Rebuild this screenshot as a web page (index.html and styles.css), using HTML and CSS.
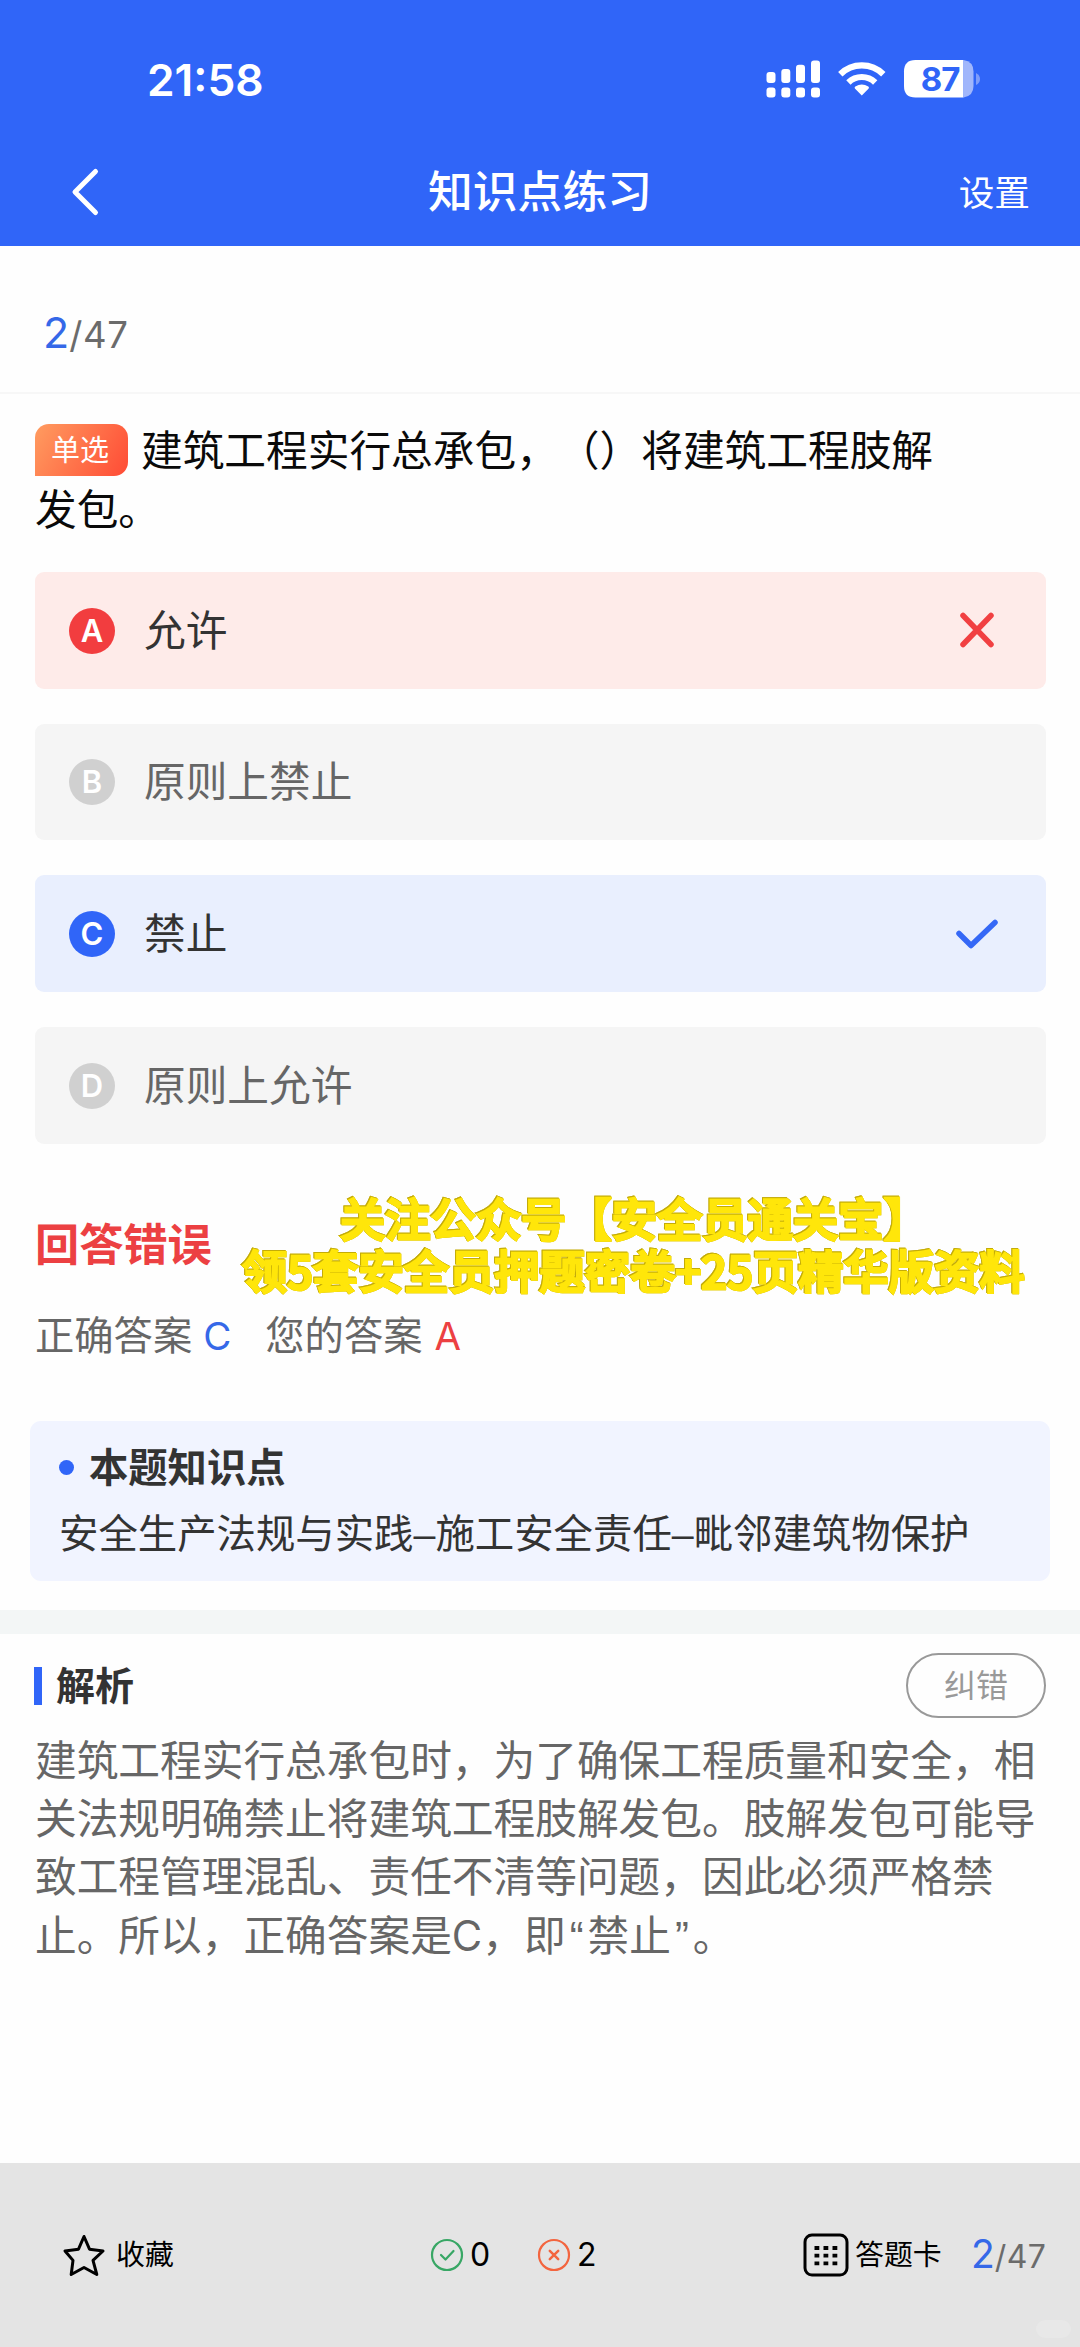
FILE: index.html
```html
<!DOCTYPE html>
<html lang="zh-CN">
<head>
<meta charset="utf-8">
<title>知识点练习</title>
<link rel="stylesheet" href="styles.css">
</head>
<body>
<header class="header">
  <div class="status">
    <span class="time">21:58</span>
    <svg class="status-icons" width="216" height="40" viewBox="766 59 216 40">
      <g fill="#fff">
        <rect x="766.5" y="72" width="9" height="11" rx="3"/><rect x="781.3" y="69" width="9" height="14" rx="3"/><rect x="796" y="64.8" width="9" height="18.2" rx="3"/><rect x="811" y="60.5" width="9" height="22.5" rx="3"/>
        <rect x="766.5" y="87.5" width="9" height="10" rx="3"/><rect x="781.3" y="87.5" width="9" height="10" rx="3"/><rect x="796" y="87.5" width="9" height="10" rx="3"/><rect x="811" y="87.5" width="9" height="10" rx="3"/>
        <path d="M861.8 95.6L854.9 88.4Q854.2 87.3 855.3 86.6Q861.8 82.2 868.3 86.6Q869.4 87.3 868.7 88.4Z"/>
      </g>
      <g fill="none" stroke="#fff" stroke-width="6.2">
        <path d="M840.3 74.3A30.5 30.5 0 0 1 883.3 74.3"/>
        <path d="M848.4 82.4A19.3 19.3 0 0 1 875.2 82.4"/>
      </g>
      <path d="M915.5 60H963.5V97.5H915.5Q904 97.5 904 86V71.500Q904 60 915.5 60Z" fill="#fff"/>
      <path d="M963.5 60Q973.5 61.500 973.5 71.500V86Q973.500 96 963.500 97.500Z" fill="#a0b6fb"/>
      <path d="M976 73Q980 75 980 79T976 85Z" fill="#7f9dfa"/>
      <text x="940" y="91" class="battery">87</text>
    </svg>
  </div>
  <nav class="nav">
    <svg class="back" width="30" height="50" viewBox="0 0 30 50"><path d="M25.500 4.500L5 25L25.500 45.500" fill="none" stroke="#fff" stroke-width="5" stroke-linecap="round" stroke-linejoin="round"/></svg>
    <h1 class="title">知识点练习</h1>
    <span class="settings">设置</span>
  </nav>
</header>

<div class="progress"><span class="cur">2</span><span class="total">/47</span></div>

<main>
  <p class="question"><span class="tag">单选</span>建筑工程实行总承包，（）将建筑工程肢解<br>发包。</p>
  <ul class="options">
    <li class="option wrong"><span class="letter">A</span><span>允许</span>
      <svg class="mark" width="48" height="48" viewBox="0 0 48 48"><path d="M10 8.500L38 37.500M38 8.500L10 37.500" stroke="#f14042" stroke-width="5.500" stroke-linecap="round"/></svg></li>
    <li class="option"><span class="letter">B</span><span>原则上禁止</span></li>
    <li class="option right"><span class="letter">C</span><span>禁止</span>
      <svg class="mark" width="48" height="48" viewBox="0 0 48 48"><path d="M6 23.500L18 35.500L42 12.500" fill="none" stroke="#3568f6" stroke-width="5.500" stroke-linecap="round" stroke-linejoin="round"/></svg></li>
    <li class="option"><span class="letter">D</span><span>原则上允许</span></li>
  </ul>

  <section class="result">
    <h2 class="verdict">回答错误</h2>
    <p class="promo"><span class="promo-top">关注公众号【安全员通关宝】</span><span>领5套安全员押题密卷+25页精华版资料</span></p>
    <p class="answers">正确答案<b class="ans-right">C</b>您的答案<b class="ans-mine">A</b></p>
  </section>

  <section class="point">
    <h3 class="point-title">本题知识点</h3>
    <p class="point-text">安全生产法规与实践<i>–</i>施工安全责任<i>–</i>毗邻建筑物保护</p>
  </section>
</main>

<section class="analysis">
  <div class="analysis-head"><h3 class="analysis-title">解析</h3><span class="report">纠错</span></div>
  <p class="analysis-text">建筑工程实行总承包时，为了确保工程质量和安全，相<br>关法规明确禁止将建筑工程肢解发包。肢解发包可能导<br>致工程管理混乱、责任不清等问题，因此必须严格禁<br>止。所以，正确答案是C，即<i>“</i>禁止<i>”</i>。</p>
</section>

<footer class="footer">
  <div class="fav">
    <svg width="44" height="44" viewBox="0 0 44 44"><path d="M22 3.500L27.500 16.200L41 18L31 27.400L34.800 41.500L22 34.500L9.200 41.500L11 27.400L3 18L16.500 16.200Z" fill="none" stroke="#000" stroke-width="3" stroke-linejoin="round"/></svg>
    <span>收藏</span>
  </div>
  <div class="count count-right">
    <svg width="34" height="34" viewBox="0 0 34 34" fill="none" stroke="#38a765" stroke-width="2.200" stroke-linecap="round" stroke-linejoin="round"><circle cx="17" cy="17" r="15"/><path d="M11 17L15.500 21.500L23.500 13"/></svg>
    <span>0</span>
  </div>
  <div class="count count-wrong">
    <svg width="34" height="34" viewBox="0 0 34 34" fill="none" stroke="#f3653f" stroke-width="2.200" stroke-linecap="round"><circle cx="17" cy="17" r="15"/><path d="M12.800 12.800L21.200 21.200M21.200 12.800L12.800 21.200" stroke-width="2.500"/></svg>
    <span>2</span>
  </div>
  <div class="card">
    <svg width="46" height="44" viewBox="0 0 46 44"><rect x="2" y="2" width="42" height="40" rx="7" fill="none" stroke="#000" stroke-width="3"/><path d="M11.500 15H16.300M20.500 15H25.300M29.500 15H34.300M11.500 22.700H16.300M20.500 22.700H25.300M29.500 22.700H34.300M11.500 30.400H16.300M20.500 30.400H25.300M29.500 30.400H34.300" stroke="#000" stroke-width="3.800"/></svg>
    <span>答题卡</span>
  </div>
  <div class="progress-small"><span class="cur">2</span><span class="total">/47</span></div>
  <span class="stamp"></span>
</footer>
</body>
</html>
```
FILE: styles.css
```css
* { box-sizing: border-box; margin: 0; padding: 0; }

body {
  width: 1080px;
  height: 2347px;
  display: flex;
  flex-direction: column;
  overflow: hidden;
  background: #fefefe;
  color: #333;
  font-family: Inter, "Noto Sans CJK SC", sans-serif;
  text-spacing-trim: space-all;
}

/* Header */
.header { height: 246px; flex: none; background: #3065f8; color: #fff; }
.status { display: flex; justify-content: space-between; align-items: center; height: 98px; margin-bottom: 34px; padding: 59px 98px 0 147px; }
.time { font-size: 44.300px; font-weight: 600; line-height: 40px; padding-top: 2px; }
.status-icons { display: block; }
.battery { font: 700 33px Inter, sans-serif; fill: #3065f8; text-anchor: middle; letter-spacing: -1px; }
.nav { display: grid; grid-template-columns: 200px 1fr 200px; align-items: center; height: 120px; padding: 0 50px 0 70px; }
.back { display: block; }
.title { font-size: 44.800px; font-weight: 500; text-align: center; padding-right: 20px; line-height: 60px; }
.settings { font-size: 35.700px; text-align: right; line-height: 50px; padding-top: 2px; }

/* Progress */
.progress { height: 148px; flex: none; padding: 56px 0 0 43px; border-bottom: 2px solid #f7f7f7; line-height: 60px; }
.cur { color: #3568e8; font-size: 43px; }
.total { color: #6b6b6b; font-size: 36.500px; letter-spacing: 0.600px; }

/* Question */
.question { height: 149px; margin: 28px 35px 0; color: #0a0a0a; font-size: 41.700px; line-height: 58.300px; }
.tag {
  display: inline-block; width: 93px; height: 52px; margin-right: 13px; vertical-align: middle;
  position: relative; top: -5px;
  border-radius: 14px 14px 14px 0; background: linear-gradient(120deg, #ff9c60, #ff4b35);
  color: #fff; font-size: 29px; line-height: 53px; text-align: center; text-indent: -3px;
}
.options { list-style: none; display: grid; gap: 35.200px; margin-top: 1px; padding: 0 34px 0 35px; grid-auto-rows: 116.500px; }
.option { display: flex; align-items: center; padding: 1px 45px 0 34px; border-radius: 9px; background: #f5f5f5; color: #666; font-size: 41.700px; line-height: 60px; }
.letter { width: 46px; height: 46px; margin-right: 29px; border-radius: 50%; background: #d0d0d0; color: #fff; font-size: 31px; font-weight: 600; line-height: 46px; text-align: center; }
.mark { margin-left: auto; }
.wrong { background: #feebe9; color: #333; }
.wrong .letter { background: #f23d3f; }
.right { background: #e9effe; color: #333; }
.right .letter { background: #3065f8; }

/* Result */
.result { display: grid; grid-template-columns: 207px 1fr; height: 277px; padding: 46px 50px 0 35px; grid-template-rows: 116px 60px; }
.verdict { color: #ec4042; font-size: 44.200px; line-height: 60px; padding-top: 25px; }
.promo {
  display: grid; justify-items: start; grid-auto-rows: 52.500px; line-height: 52.500px; padding-top: 1px;
  font-family: "Noto Sans CJK SC", sans-serif;
  font-size: 45.300px; font-weight: 500; color: #ffe60a; white-space: nowrap;
  -webkit-text-stroke: 2.600px #ffe60a; paint-order: stroke fill;
  filter: drop-shadow(0.800px 0.800px 0 #c4ac08) drop-shadow(-0.800px -0.800px 0 #c4ac08);
}
.promo-top { margin-left: 98px; }
.answers { grid-column: 1 / 3; color: #666; font-size: 39.300px; line-height: 60px; }
.answers b { font-weight: 400; font-size: 38.500px; }
.ans-right { color: #3568e8; margin: 0 34px 0 11px; }
.ans-mine { color: #ec4042; margin-left: 12px; }

/* Knowledge point */
.point { height: 160px; margin: 0 30px; padding: 17px 29px 0; border-radius: 11px; background: #f1f4ff; }
.point-title { display: flex; align-items: center; gap: 15px; font-size: 39.300px; line-height: 60px; }
.point-title::before { content: ""; width: 15px; height: 15px; border-radius: 50%; background: #3065f8; }
.point-text { font-size: 39.400px; line-height: 60px; margin-top: 6px; white-space: nowrap; }
.point-text i { font-family: "Liberation Sans", sans-serif; font-style: normal; }

/* Analysis */
.analysis { flex: 1; margin-top: 29px; border-top: 24px solid #f3f6f6; padding: 19px 34px 0 34px; }
.analysis-head { display: flex; justify-content: space-between; align-items: center; height: 66px; }
.analysis-title { display: flex; align-items: center; gap: 14px; font-size: 39px; line-height: 60px; }
.analysis-title::before { content: ""; width: 8px; height: 38px; background: #3065f8; }
.report { width: 140px; height: 65px; border: 2px solid #999; border-radius: 33px; color: #999; font-size: 32px; line-height: 61px; text-align: center; }
.analysis-text { margin-top: 13px; padding-left: 1px; color: #666; font-size: 41.700px; line-height: 58.400px; white-space: nowrap; }
.analysis-text i { font-family: "Liberation Sans", sans-serif; font-style: normal; padding: 0 4px; }

/* Footer */
.footer { position: relative; display: flex; align-items: center; flex: none; height: 184px; background: #e4e4e4; color: #000; padding-left: 62px; font-size: 28.900px; line-height: 50px; }
.footer svg { display: block; flex: none; }
.fav, .count, .card { display: flex; align-items: center; }
.fav { width: 368px; gap: 10px; }
.count { gap: 6px; font-size: 32px; }
.count-right { width: 107px; }
.count-wrong { width: 266px; }
.card { gap: 6px; width: 168px; }
.progress-small { padding-top: 2px; }
.progress-small .cur { font-size: 39px; }
.progress-small .total { font-size: 32px; letter-spacing: 0.400px; }
.stamp { position: absolute; right: 9px; bottom: 9px; width: 35px; height: 18px; border-radius: 9px; background: #e8e8e8; }
```
